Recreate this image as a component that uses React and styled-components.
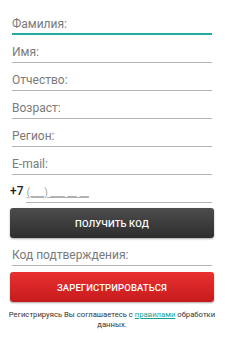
import React from "react";
import styled, { createGlobalStyle } from "styled-components";

const GlobalStyle = createGlobalStyle`
	html, body {
		margin: 0;
		padding: 0;
		background: #ffffff;
	}
	body {
		font-family: Roboto, "Liberation Sans", sans-serif;
	}
`;

const fields = ["Фамилия:", "Имя:", "Отчество:", "Возраст:", "Регион:", "E-mail:"];

export default function App() {
	return (
		<>
			<GlobalStyle />
			<Form>
				{fields.map((label, i) => (
					<Field key={label} active={i === 0}>
						<Placeholder>{label}</Placeholder>
					</Field>
				))}
				<PhoneRow>
					<PhonePrefix>+7</PhonePrefix>
					<PhoneInput>
						<PhoneMask>(___) ___ __ __</PhoneMask>
					</PhoneInput>
				</PhoneRow>
				<Button variant="dark">получить код</Button>
				<Field>
					<Placeholder>Код подтверждения:</Placeholder>
				</Field>
				<Button variant="red">Зарегистрироваться</Button>
				<Note>
					Регистрируясь Вы соглашаетесь с <NoteLink>правилами</NoteLink> обработки
					<br />
					данных.
				</Note>
			</Form>
		</>
	);
}

const Form = styled.div`
	width: 225px;
	height: 355px;
	box-sizing: border-box;
	padding: 7px 13px 0 12px;
	display: flex;
	flex-direction: column;
	background: #ffffff;
`;

const Field = styled.div`
	height: 28px;
	box-sizing: border-box;
	display: flex;
	align-items: flex-end;
	border-bottom: ${(p) => (p.active ? "2px solid #20ad9f" : "1px solid #b4b4b4")};
	padding-bottom: ${(p) => (p.active ? "2px" : "3px")};
`;

const Placeholder = styled.span`
	font-size: 12px;
	line-height: 14px;
	color: #7a7a7a;
	white-space: nowrap;
`;

const PhoneRow = styled.div`
	height: 28px;
	margin-left: -2px;
	display: flex;
	align-items: flex-end;
	gap: 3px;
`;

const PhonePrefix = styled.span`
	font-size: 12px;
	font-weight: 500;
	line-height: 14px;
	color: #1c1c1c;
	padding-bottom: 5px;
`;

const PhoneInput = styled.div`
	flex: 1;
	box-sizing: border-box;
	border-bottom: 1px solid #b4b4b4;
	padding-bottom: 2px;
	display: flex;
	align-items: flex-end;
`;

const PhoneMask = styled.span`
	font-size: 10.5px;
	line-height: 14px;
	color: #a8a8a8;
	text-decoration: underline;
	text-decoration-color: #b0b0b0;
`;

const Button = styled.div`
	margin: ${(p) => (p.variant === "dark" ? "5px -2px 0" : "6px -2px 0")};
	height: 30px;
	border-radius: 3px;
	display: flex;
	align-items: center;
	justify-content: center;
	color: #ffffff;
	font-size: 9.5px;
	font-weight: 500;
	text-transform: uppercase;
	letter-spacing: 0.1px;
	background: ${(p) =>
		p.variant === "dark"
			? "linear-gradient(#4d4d4d, #2d2d2d)"
			: "linear-gradient(#e8302f, #c71b1d)"};
	box-shadow: 0 1px 2px rgba(0, 0, 0, 0.35);
`;

const Note = styled.p`
	margin: 8px -10px 0;
	font-size: 7.7px;
	line-height: 9.5px;
	color: #333333;
	text-align: center;
`;

const NoteLink = styled.span`
	color: #1a9e92;
	text-decoration: underline;
`;
